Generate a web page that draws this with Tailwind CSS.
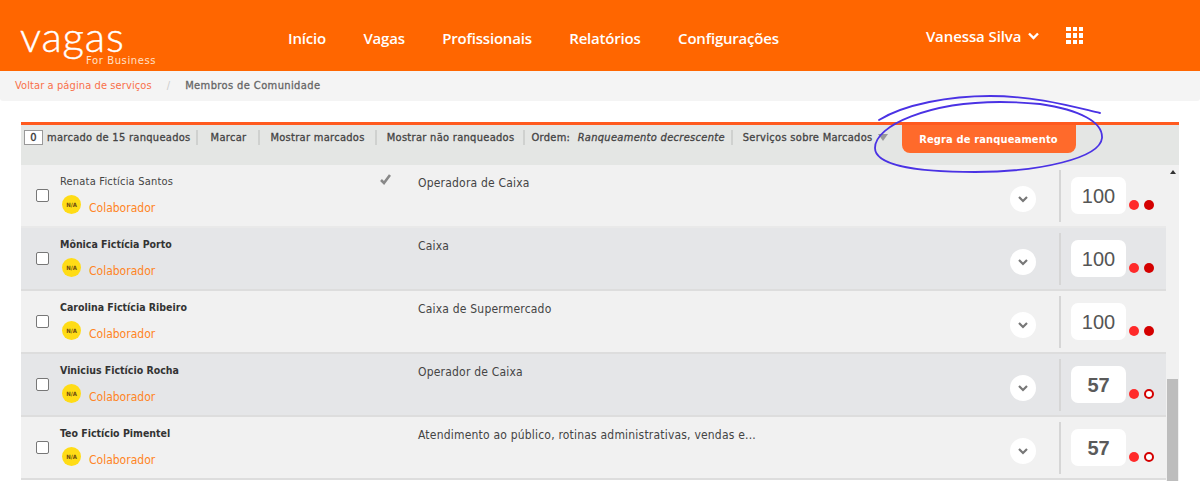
<!DOCTYPE html>
<html lang="en">
<head>
    <meta charset="UTF-8">
    <script src="https://cdn.jsdelivr.net/npm/@tailwindcss/browser@4"></script>
    <title>Vagas for Business</title>
</head>
<body class="relative h-[481px] overflow-hidden bg-white font-['DejaVu_Sans_Condensed','DejaVu_Sans',sans-serif]">

    <header class="h-[71px] bg-[#ff6600] flex text-white font-['Open_Sans',sans-serif]">
        <div class="relative w-[288px] pl-[20px] pt-[21px] shrink-0">
            <span class="block font-['Lato',sans-serif] font-light text-[42px] leading-[30px] tracking-[0.8px] [-webkit-text-stroke:0.4px]">vagas</span>
            <span class="absolute left-[86px] top-[54px] font-['DejaVu_Sans',sans-serif] text-[10px] leading-[14px] tracking-[0.6px] text-[#ffe0c8]">For Business</span>
        </div>
        <nav class="flex gap-[37.5px] pt-[27px] text-[15px] leading-[22px] font-semibold tracking-[-0.2px]">
            <a>Início</a>
            <a>Vagas</a>
            <a>Profissionais</a>
            <a>Relatórios</a>
            <a>Configurações</a>
        </nav>
        <div class="ml-[147px] pt-[25px] flex text-[15px] leading-[22px] font-semibold tracking-[-0.1px]">
            <span>Vanessa Silva</span>
            <svg class="ml-[7px] mt-[7px]" width="11" height="8" viewBox="0 0 11 8" fill="none" stroke="white" stroke-width="2.4"><path d="M1 1.5l4.5 4.5 4.5-4.5"/></svg>
            <div class="ml-[27px] mt-[2px] grid grid-cols-3 gap-[2px] w-[17px] h-[17px]">
                <i class="bg-white"></i><i class="bg-white"></i><i class="bg-white"></i>
                <i class="bg-white"></i><i class="bg-white"></i><i class="bg-white"></i>
                <i class="bg-white"></i><i class="bg-white"></i><i class="bg-white"></i>
            </div>
        </div>
    </header>

    <div class="h-[30px] bg-[#f4f4f4] rounded-b-[3px] flex items-center pl-[15px] text-[11px] tracking-[0.1px]">
        <a class="text-[#f9704a]">Voltar a página de serviços</a>
        <span class="ml-[15px] text-[#cccccc]">/</span>
        <span class="ml-[15px] text-[#666666] tracking-[0.4px] [-webkit-text-stroke:0.3px]">Membros de Comunidade</span>
    </div>

    <section class="ml-[21px] w-[1158px] mt-[21px] border-t-[3px] border-[#ff5a1f]">
        <div class="h-[40px] bg-[#e4e6e4] flex items-start pt-[5px] text-[11px] leading-[15px] tracking-[0.3px] text-[#444444] whitespace-nowrap [-webkit-text-stroke:0.3px]">
            <span class="ml-[3px] w-[19px] h-[15px] bg-white border border-[#999999] text-center leading-[13px] text-[#333333]">0</span>
            <span class="ml-[4px] pr-[5px] border-r-[2px] border-[#cfd1cf]">marcado de 15 ranqueados</span>
            <span class="ml-[13px] pr-[12px] border-r-[2px] border-[#cfd1cf]">Marcar</span>
            <span class="ml-[10px] pr-[10px] border-r-[2px] border-[#cfd1cf]">Mostrar marcados</span>
            <span class="ml-[10px] pr-[9px] border-r-[2px] border-[#cfd1cf]">Mostrar não ranqueados</span>
            <span class="ml-[6px] pr-[6px] border-r-[2px] border-[#cfd1cf]">Ordem: <em class="ml-[4px]">Ranqueamento decrescente</em></span>
            <span class="ml-[10px]">Serviços sobre Marcados</span>
            <span class="ml-[5px] mt-[4px] w-0 h-0 border-x-[5px] border-x-transparent border-t-[7px] border-t-[#999999]"></span>
            <button class="ml-[14px] -mt-[5px] w-[174px] h-[28px] bg-[#ff6a2b] rounded-b-[8px] text-white font-bold text-[11px] tracking-[0.15px] [-webkit-text-stroke:0]">Regra de ranqueamento</button>
        </div>

        <div class="flex">
            <div class="w-[1145px] h-[316px] overflow-hidden">

                <div class="h-[63px] border-b-[2px] border-[#e9e9e9] bg-[#f1f1f1] flex text-[#444444]">
                    <input type="checkbox" class="ml-[15px] mt-[24px] w-[13px] h-[13px] appearance-none bg-white border border-[#777777] rounded-[2px]">
                    <div class="ml-[11px] w-[331px] relative">
                        <div class="pt-[10px] text-[11px] leading-[14px] tracking-[0.2px] text-[#444444]">Renata Fictícia Santos</div>
                        <svg class="absolute right-[0px] top-[9px]" width="11" height="11" viewBox="0 0 11 11" fill="none" stroke="#888888" stroke-width="2.6"><path d="M1 6l3 3 6-8"/></svg>
                        <div class="mt-[6px] flex items-start">
                            <span class="ml-[2px] w-[19px] h-[19px] rounded-full bg-[#ffdc16] text-center text-[6px] leading-[19px] font-bold text-[#6b4a10]">N/A</span>
                            <span class="ml-[8px] mt-[5px] text-[12px] leading-[16px] text-[#ff8424]">Colaborador</span>
                        </div>
                    </div>
                    <div class="ml-[27px] w-[592px] pt-[10px] text-[12px] leading-[16px] tracking-[0.2px]">Operadora de Caixa</div>
                    <span class="mt-[21px] w-[26px] h-[26px] rounded-full bg-white flex items-center justify-center"><svg width="10" height="7" viewBox="0 0 10 7" fill="none" stroke="#777777" stroke-width="2.2"><path d="M1 1l4 4 4-4"/></svg></span>
                    <div class="ml-[23px] mt-[5px] h-[52px] border-l-[2px] border-[#d6d6d6]"></div>
                    <span class="ml-[10px] mt-[12px] w-[55px] h-[37px] rounded-[7px] bg-white text-center font-['Liberation_Sans',sans-serif] text-[20px] leading-[39px] text-[#555555]">100</span>
                    <span class="ml-[3px] mt-[35px] w-[10px] h-[10px] rounded-full bg-[#ff2a2a]"></span>
                    <span class="ml-[5px] mt-[35px] w-[10px] h-[10px] rounded-full bg-[#d40000]"></span>
                </div>

                <div class="h-[63px] border-b-[2px] border-[#dddddd] bg-[#e5e6e8] flex text-[#444444]">
                    <input type="checkbox" class="ml-[15px] mt-[24px] w-[13px] h-[13px] appearance-none bg-white border border-[#777777] rounded-[2px]">
                    <div class="ml-[11px] w-[331px]">
                        <div class="pt-[9px] text-[10.5px] leading-[14px] font-bold text-[#333333]">Mônica Fictícia Porto</div>
                        <div class="mt-[7px] flex items-start">
                            <span class="ml-[2px] w-[19px] h-[19px] rounded-full bg-[#ffdc16] text-center text-[6px] leading-[19px] font-bold text-[#6b4a10]">N/A</span>
                            <span class="ml-[8px] mt-[5px] text-[12px] leading-[16px] text-[#ff8424]">Colaborador</span>
                        </div>
                    </div>
                    <div class="ml-[27px] w-[592px] pt-[10px] text-[12px] leading-[16px] tracking-[0.2px]">Caixa</div>
                    <span class="mt-[21px] w-[26px] h-[26px] rounded-full bg-white flex items-center justify-center"><svg width="10" height="7" viewBox="0 0 10 7" fill="none" stroke="#777777" stroke-width="2.2"><path d="M1 1l4 4 4-4"/></svg></span>
                    <div class="ml-[23px] mt-[5px] h-[52px] border-l-[2px] border-[#d6d6d6]"></div>
                    <span class="ml-[10px] mt-[12px] w-[55px] h-[37px] rounded-[7px] bg-white text-center font-['Liberation_Sans',sans-serif] text-[20px] leading-[39px] text-[#555555]">100</span>
                    <span class="ml-[3px] mt-[35px] w-[10px] h-[10px] rounded-full bg-[#ff2a2a]"></span>
                    <span class="ml-[5px] mt-[35px] w-[10px] h-[10px] rounded-full bg-[#d40000]"></span>
                </div>

                <div class="h-[63px] border-b-[2px] border-[#dddddd] bg-[#f1f1f1] flex text-[#444444]">
                    <input type="checkbox" class="ml-[15px] mt-[24px] w-[13px] h-[13px] appearance-none bg-white border border-[#777777] rounded-[2px]">
                    <div class="ml-[11px] w-[331px]">
                        <div class="pt-[9px] text-[10.5px] leading-[14px] font-bold text-[#333333]">Carolina Fictícia Ribeiro</div>
                        <div class="mt-[7px] flex items-start">
                            <span class="ml-[2px] w-[19px] h-[19px] rounded-full bg-[#ffdc16] text-center text-[6px] leading-[19px] font-bold text-[#6b4a10]">N/A</span>
                            <span class="ml-[8px] mt-[5px] text-[12px] leading-[16px] text-[#ff8424]">Colaborador</span>
                        </div>
                    </div>
                    <div class="ml-[27px] w-[592px] pt-[10px] text-[12px] leading-[16px] tracking-[0.2px]">Caixa de Supermercado</div>
                    <span class="mt-[21px] w-[26px] h-[26px] rounded-full bg-white flex items-center justify-center"><svg width="10" height="7" viewBox="0 0 10 7" fill="none" stroke="#777777" stroke-width="2.2"><path d="M1 1l4 4 4-4"/></svg></span>
                    <div class="ml-[23px] mt-[5px] h-[52px] border-l-[2px] border-[#d6d6d6]"></div>
                    <span class="ml-[10px] mt-[12px] w-[55px] h-[37px] rounded-[7px] bg-white text-center font-['Liberation_Sans',sans-serif] text-[20px] leading-[39px] text-[#555555]">100</span>
                    <span class="ml-[3px] mt-[35px] w-[10px] h-[10px] rounded-full bg-[#ff2a2a]"></span>
                    <span class="ml-[5px] mt-[35px] w-[10px] h-[10px] rounded-full bg-[#d40000]"></span>
                </div>

                <div class="h-[63px] border-b-[2px] border-[#dddddd] bg-[#e5e6e8] flex text-[#444444]">
                    <input type="checkbox" class="ml-[15px] mt-[24px] w-[13px] h-[13px] appearance-none bg-white border border-[#777777] rounded-[2px]">
                    <div class="ml-[11px] w-[331px]">
                        <div class="pt-[9px] text-[10.5px] leading-[14px] font-bold text-[#333333]">Vinicius Fictício Rocha</div>
                        <div class="mt-[7px] flex items-start">
                            <span class="ml-[2px] w-[19px] h-[19px] rounded-full bg-[#ffdc16] text-center text-[6px] leading-[19px] font-bold text-[#6b4a10]">N/A</span>
                            <span class="ml-[8px] mt-[5px] text-[12px] leading-[16px] text-[#ff8424]">Colaborador</span>
                        </div>
                    </div>
                    <div class="ml-[27px] w-[592px] pt-[10px] text-[12px] leading-[16px] tracking-[0.2px]">Operador de Caixa</div>
                    <span class="mt-[21px] w-[26px] h-[26px] rounded-full bg-white flex items-center justify-center"><svg width="10" height="7" viewBox="0 0 10 7" fill="none" stroke="#777777" stroke-width="2.2"><path d="M1 1l4 4 4-4"/></svg></span>
                    <div class="ml-[23px] mt-[5px] h-[52px] border-l-[2px] border-[#d6d6d6]"></div>
                    <span class="ml-[10px] mt-[12px] w-[55px] h-[37px] rounded-[7px] bg-white text-center font-['Liberation_Sans',sans-serif] text-[20px] leading-[39px] font-bold text-[#5a5a5a]">57</span>
                    <span class="ml-[3px] mt-[35px] w-[10px] h-[10px] rounded-full bg-[#ff2a2a]"></span>
                    <span class="ml-[5px] mt-[35px] w-[10px] h-[10px] rounded-full bg-white border-[2px] border-[#d40000]"></span>
                </div>

                <div class="h-[63px] border-b-[2px] border-[#dddddd] bg-[#f1f1f1] flex text-[#444444]">
                    <input type="checkbox" class="ml-[15px] mt-[24px] w-[13px] h-[13px] appearance-none bg-white border border-[#777777] rounded-[2px]">
                    <div class="ml-[11px] w-[331px]">
                        <div class="pt-[9px] text-[10.5px] leading-[14px] font-bold text-[#333333]">Teo Fictício Pimentel</div>
                        <div class="mt-[7px] flex items-start">
                            <span class="ml-[2px] w-[19px] h-[19px] rounded-full bg-[#ffdc16] text-center text-[6px] leading-[19px] font-bold text-[#6b4a10]">N/A</span>
                            <span class="ml-[8px] mt-[5px] text-[12px] leading-[16px] text-[#ff8424]">Colaborador</span>
                        </div>
                    </div>
                    <div class="ml-[27px] w-[592px] pt-[10px] text-[12px] leading-[16px] tracking-[0.2px]">Atendimento ao público, rotinas administrativas, vendas e...</div>
                    <span class="mt-[21px] w-[26px] h-[26px] rounded-full bg-white flex items-center justify-center"><svg width="10" height="7" viewBox="0 0 10 7" fill="none" stroke="#777777" stroke-width="2.2"><path d="M1 1l4 4 4-4"/></svg></span>
                    <div class="ml-[23px] mt-[5px] h-[52px] border-l-[2px] border-[#d6d6d6]"></div>
                    <span class="ml-[10px] mt-[12px] w-[55px] h-[37px] rounded-[7px] bg-white text-center font-['Liberation_Sans',sans-serif] text-[20px] leading-[39px] font-bold text-[#5a5a5a]">57</span>
                    <span class="ml-[3px] mt-[35px] w-[10px] h-[10px] rounded-full bg-[#ff2a2a]"></span>
                    <span class="ml-[5px] mt-[35px] w-[10px] h-[10px] rounded-full bg-white border-[2px] border-[#d40000]"></span>
                </div>

            </div>

            <div class="w-[13px] h-[316px] bg-[#f1f1f1] flex flex-col items-center">
                <span class="mt-[5px] w-0 h-0 border-x-[3px] border-x-transparent border-b-[4px] border-b-[#333333]"></span>
                <span class="mt-[205px] w-[11px] flex-1 bg-[#bdbdbd]"></span>
            </div>
        </div>
    </section>

    <!-- hand drawn circle over the button -->
    <svg class="absolute left-0 top-0 pointer-events-none" width="1200" height="481" fill="none" stroke="#4a32e4" stroke-width="1.8" stroke-linecap="round">
        <path d="M879 120C905 104 950 96 990 96C1035 96 1070 106 1100 113"/>
        <path d="M1040 104C1080 110 1103 122 1102 138C1100 158 1040 172 975 172C915 172 875 165 875 148C875 125 930 102 1000 102C1015 102 1030 103 1040 104"/>
    </svg>

</body>
</html>
